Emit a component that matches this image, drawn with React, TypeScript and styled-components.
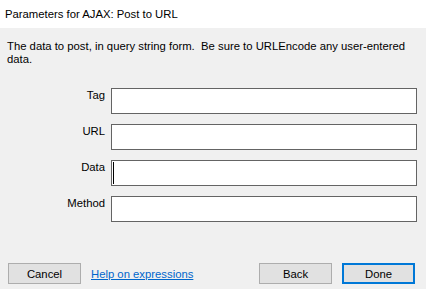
import React from 'react';
import styled, {createGlobalStyle} from "styled-components";

const GlobalStyle = createGlobalStyle`
  html, body {
    margin: 0;
    padding: 0;
    background: #f0f0f0;
  }
  body {
    font-family: "Liberation Sans", Arial, sans-serif;
    font-size: 11.3px;
    color: #000;
  }
`

const fields = ['Tag', 'URL', 'Data', 'Method']

export default function App() {
    return (
        <Dialog>
            <GlobalStyle/>
            <TitleBar>Parameters for AJAX: Post to URL</TitleBar>
            <Body>
                <Description>
                    The data to post, in query string form.&nbsp; Be sure to URLEncode any user-entered<br/>data.
                </Description>
                <Fields>
                    {fields.map(name => (
                        <FieldRow key={name}>
                            <Label>{name}</Label>
                            <InputBox>
                                {name === 'Data' && <Caret/>}
                            </InputBox>
                        </FieldRow>
                    ))}
                </Fields>
            </Body>
            <Footer>
                <Button>Cancel</Button>
                <HelpLink href="#">Help on expressions</HelpLink>
                <Spacer/>
                <Button>Back</Button>
                <Button primary>Done</Button>
            </Footer>
        </Dialog>
    );
}

const Dialog = styled.div`
  width: 426px;
  height: 289px;
  display: flex;
  flex-direction: column;
  background: #f0f0f0;
  overflow: hidden;
`
const TitleBar = styled.div`
  height: 28px;
  background: #fff;
  display: flex;
  align-items: center;
  padding-left: 5px;
`
const Body = styled.div`
  flex: 1;
  padding: 12px 9px 0 7px;
`
const Description = styled.div`
  line-height: 13px;
  white-space: nowrap;
`
const Fields = styled.div`
  display: flex;
  flex-direction: column;
  gap: 10px;
  margin-top: 22px;
`
const FieldRow = styled.div`
  display: flex;
  align-items: flex-start;
`
const Label = styled.div`
  width: 98px;
  text-align: right;
  padding-top: 1px;
  padding-right: 6px;
`
const InputBox = styled.div`
  position: relative;
  width: 306px;
  height: 26px;
  box-sizing: border-box;
  border: 1px solid #646464;
  background: #fff;
`
const Caret = styled.span`
  position: absolute;
  left: 1px;
  top: 1px;
  width: 1px;
  height: 22px;
  background: #000;
`
const Footer = styled.div`
  display: flex;
  align-items: center;
  padding: 0 11px 5px 8px;
  height: 21px;
`
const Spacer = styled.div`
  flex: 1;
`
const Button = styled.button<{ primary?: boolean }>`
  width: 73px;
  height: 21px;
  box-sizing: border-box;
  font-family: "Liberation Sans", Arial, sans-serif;
  font-size: 11.3px;
  color: #000;
  background: #e1e1e1;
  border: ${p => p.primary ? '2px solid #0078d7' : '1px solid #adadad'};
  padding: 0;
  margin-left: ${p => p.primary ? '10px' : '0'};
`
const HelpLink = styled.a`
  margin-left: 10px;
  color: #0066cc;
  text-decoration: underline;
`
